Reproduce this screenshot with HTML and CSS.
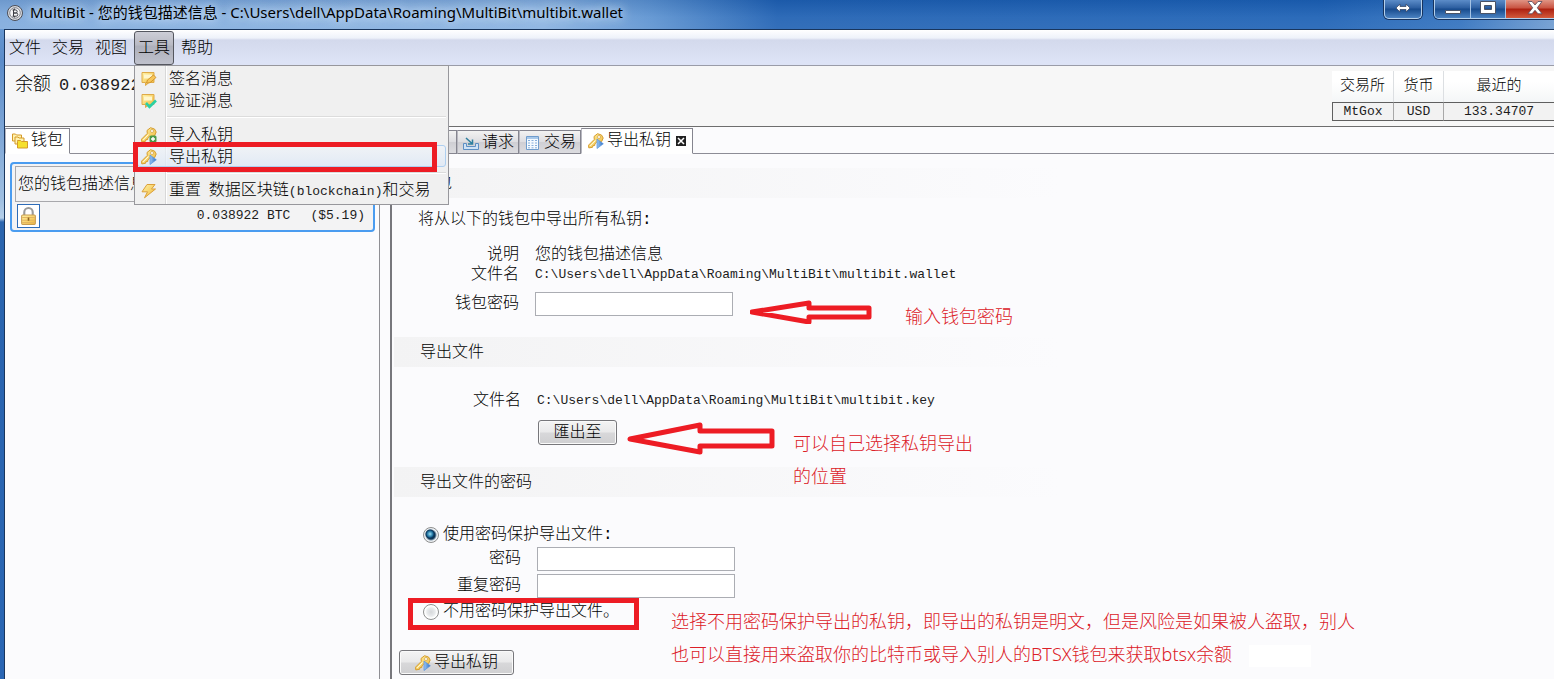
FILE: index.html
```html
<!DOCTYPE html>
<html lang="zh-CN">
<head>
  <meta charset="UTF-8">
  <meta name="viewport" content="width=device-width, initial-scale=1.0">
  <title>MultiBit</title>
  <link rel="stylesheet" href="styles.css">
</head>
<body>

  <!-- Shared icons -->
  <svg class="sprite" width="0" height="0">
    <defs>
      <linearGradient id="gold" x1="0" y1="0" x2="1" y2="1">
        <stop offset="0" stop-color="#fff3a8"/>
        <stop offset="1" stop-color="#f0b636"/>
      </linearGradient>
      <linearGradient id="blue" x1="0" y1="0" x2="1" y2="0">
        <stop offset="0" stop-color="#9cc8f4"/>
        <stop offset="1" stop-color="#2f6fc4"/>
      </linearGradient>
    </defs>
    <symbol id="key" viewBox="0 0 16 16">
      <path d="M6 3.500 9.500.7l4 1.300 1.700 3-1.500 3.500-3.200 1.200-2-.4-1.600 1.600-.2 1.600-1.800.2-.4 1.600-3.700.6-.3-2.700L6.300 6.400z" fill="url(#gold)" stroke="#d69d2e"/>
      <circle cx="11" cy="4" r="1.500" fill="#fff" stroke="#c49430" stroke-width=".6"/>
      <path d="M2.200 13 7.500 7.500" stroke="#fffbe0"/>
    </symbol>
    <symbol id="key-export" viewBox="0 0 16 16">
      <use href="#key"/>
      <path d="M9 6v9.500l6.300-4.700z" fill="url(#blue)" stroke="#5590dc" stroke-width=".7"/>
    </symbol>
    <symbol id="key-import" viewBox="0 0 16 16">
      <use href="#key"/>
      <rect x="8.500" y="8.500" width="7" height="7" rx="1.500" fill="#4c9a48"/>
      <path d="M12 10v4M10 12h4" stroke="#fff" stroke-width="1.400"/>
    </symbol>
    <symbol id="note" viewBox="0 0 16 16">
      <path d="M1 1.500h12v10H8l-3.500 3v-3H1z" fill="url(#gold)" stroke="#dfaa48"/>
      <path d="M3 3.500h8v4H3z" fill="#fff6cc"/>
    </symbol>
    <symbol id="sign" viewBox="0 0 16 16">
      <use href="#note"/>
      <path d="m5.500 12 1-3 6-5 2.500 2.500-6 5.200z" fill="#f8c65a" stroke="#c98a22" stroke-width=".8"/>
    </symbol>
    <symbol id="verify" viewBox="0 0 16 16">
      <use href="#note"/>
      <path d="m5 10 3.500 3.800L15 7.500" fill="none" stroke="#2ad0a4" stroke-width="2.600"/>
    </symbol>
    <symbol id="bolt" viewBox="0 0 16 16">
      <path d="M6 1.500h8L10.500 6h4L3.500 14.800l3-6H1z" fill="url(#gold)" stroke="#dba03a"/>
    </symbol>
    <symbol id="wallets" viewBox="0 0 16 16">
      <g fill="#fff2b0" stroke="#d59a28">
        <path d="M.5 2V1h3l1 1h5v6h-9z"/>
        <path d="M3 5V4h3l1 1h5v6H3z"/>
        <path d="M5.500 8.500v-1h3l1 1h6v6.500h-10z" fill="#f6e02c"/>
      </g>
    </symbol>
    <symbol id="request" viewBox="0 0 16 16">
      <path d="M.5 8.500v6h15v-6h-3v3h-9v-3z" fill="#cfe2f5" stroke="#5d8fc4"/>
      <path d="m3 3 6 5.500M9.500 4.500V9H5" fill="none" stroke="#2e7f9e" stroke-width="1.500"/>
    </symbol>
    <symbol id="send" viewBox="0 0 16 16">
      <path d="M.5 8.500v6h15v-6h-3v3h-9v-3z" fill="#cfe2f5" stroke="#5d8fc4"/>
      <path d="m5 9 6-6M6.500 2.500H11V7" fill="none" stroke="#2e7f9e" stroke-width="1.500"/>
    </symbol>
    <symbol id="sheet" viewBox="0 0 16 16">
      <path d="M1.500 1.500h12v13h-12z" fill="#f4faff" stroke="#6f9ccc"/>
      <path d="M2 3h11" stroke="#a7c8ea" stroke-width="2"/>
      <path d="M3 5.500h9M3 8h9M3 10.500h9M3 12.800h9" stroke="#86aeda" stroke-dasharray="2 1.500"/>
    </symbol>
  </svg>

  <div class="window">

    <!-- Title bar -->
    <div class="title-bar">
      <svg class="logo" viewBox="0 0 16 16">
        <circle cx="8" cy="8" r="7.500" fill="#d9dbe0" stroke="#4a4d55"/>
        <circle cx="8" cy="8" r="5.300" fill="#f4f4f6" stroke="#85878f"/>
        <path d="M6.500 4.500v7M5.500 5h3.200a1.500 1.500 0 0 1 0 3H6.500h2.700a1.600 1.600 0 0 1 0 3.200H5.500M7.600 3.500v1.500M7.600 11v1.500" fill="none" stroke="#3c3e45"/>
      </svg>
      <span class="title">MultiBit - 您的钱包描述信息 - C:\Users\dell\AppData\Roaming\MultiBit\multibit.wallet</span>
      <div class="window-buttons">
        <button class="win-btn resize" aria-label="调整">
          <svg width="16" height="10" viewBox="0 0 16 10"><path d="M1 5l4-4v2.500h6V1l4 4-4 4V6.500H5V9z" fill="#fff" stroke="#3b4a68" stroke-width=".8"/></svg>
        </button>
        <div class="win-group">
          <button class="win-btn" aria-label="最小化">
            <svg width="18" height="14" viewBox="0 0 18 14"><path d="M1.500 9.500h15v3h-15z" fill="#fff" stroke="#4b5366"/></svg>
          </button>
          <button class="win-btn" aria-label="最大化">
            <svg width="18" height="14" viewBox="0 0 18 14"><path d="M1.500 .5h15v12h-15zM5.500 4.500v4h7v-4z" fill="#fff" fill-rule="evenodd" stroke="#4b5366"/></svg>
          </button>
          <button class="win-btn close" aria-label="关闭">
            <svg width="16" height="14" viewBox="0 0 16 14"><path d="M1 .5h4l3 3.500 3-3.500h4L10.300 6.800l4.700 6h-4L8 9.300l-3 3.500H1l4.700-6z" fill="#fff" stroke="#54465a" stroke-width=".8"/></svg>
          </button>
        </div>
      </div>
    </div>

    <div class="app">

      <!-- Menu bar -->
      <nav class="menu-bar">
        <button>文件</button>
        <button>交易</button>
        <button>视图</button>
        <div class="menu">
          <button class="open">工具</button>
          <div class="dropdown">
            <button class="item"><svg><use href="#sign"/></svg>签名消息</button>
            <button class="item"><svg><use href="#verify"/></svg>验证消息</button>
            <hr>
            <button class="item"><svg><use href="#key-import"/></svg>导入私钥</button>
            <button class="item active"><svg><use href="#key-export"/></svg>导出私钥</button>
            <hr>
            <button class="item"><svg><use href="#bolt"/></svg><span>重置<code> </code>数据区块链<code>(blockchain)</code>和交易</span></button>
            <div class="mark-item"></div>
          </div>
        </div>
        <button>帮助</button>
      </nav>

      <!-- Balance and ticker -->
      <header class="summary">
        <div class="balance">余额<span>0.038922 BTC</span></div>
        <table class="ticker">
          <thead>
            <tr><th>交易所</th><th>货币</th><th>最近的</th></tr>
          </thead>
          <tbody>
            <tr><td>MtGox</td><td>USD</td><td>133.34707</td></tr>
          </tbody>
        </table>
      </header>

      <div class="panes">

        <!-- Wallet list -->
        <aside class="wallets">
          <div class="tabs">
            <button class="tab current"><svg><use href="#wallets"/></svg>钱包</button>
          </div>
          <div class="wallet">
            <div class="wallet-name">您的钱包描述信息</div>
            <div class="wallet-row">
              <button class="lock" aria-label="加密">
                <svg viewBox="0 0 16 18">
                  <path d="M4 8V5a4 4 0 0 1 8 0v3" fill="none" stroke="#9a9a9a" stroke-width="2"/>
                  <rect x="1.500" y="7.500" width="13" height="9" rx="1" fill="url(#gold)" stroke="#c79c50"/>
                  <path d="M2 10h12M2 12.500h12M2 14.800h12" stroke="#e3b460"/>
                  <path d="M8 10v3" stroke="#8a6420" stroke-width="1.500"/>
                </svg>
              </button>
              <span class="amount">0.038922 BTC</span>
              <span class="amount">($5.19)</span>
            </div>
          </div>
        </aside>

        <!-- Export private keys -->
        <main class="detail">
          <div class="tabs">
            <button class="tab"><svg><use href="#send"/></svg>发送</button>
            <button class="tab"><svg><use href="#request"/></svg>请求</button>
            <button class="tab"><svg><use href="#sheet"/></svg>交易</button>
            <button class="tab current"><svg><use href="#key-export"/></svg>导出私钥
              <svg class="tab-close" viewBox="0 0 10 10"><path d="M0 0h10v10H0z" fill="#222"/><path d="m2 2 6 6M8 2 2 8" stroke="#fff" stroke-width="1.500"/></svg>
            </button>
          </div>

          <h2>钱包</h2>
          <section class="source">
            <p>将从以下的钱包中导出所有私钥:</p>
            <div class="row"><span class="label">说明</span><span>您的钱包描述信息</span></div>
            <div class="row"><span class="label">文件名</span><span class="path">C:\Users\dell\AppData\Roaming\MultiBit\multibit.wallet</span></div>
            <div class="row field"><label class="label" for="wallet-password">钱包密码</label><input type="password" id="wallet-password"></div>
          </section>

          <h2>导出文件</h2>
          <section class="target">
            <div class="row"><span class="label">文件名</span><span class="path">C:\Users\dell\AppData\Roaming\MultiBit\multibit.key</span></div>
            <button class="push">匯出至</button>
          </section>

          <h2>导出文件的密码</h2>
          <section class="protect">
            <label class="choice"><input type="radio" name="protect" checked>使用密码保护导出文件:</label>
            <div class="row field"><label class="label" for="password">密码</label><input type="password" id="password"></div>
            <div class="row field"><label class="label" for="repeat">重复密码</label><input type="password" id="repeat"></div>
            <label class="choice plain"><input type="radio" name="protect">不用密码保护导出文件。<span class="mark-choice"></span></label>
          </section>
          <button class="push export"><svg><use href="#key-export"/></svg>导出私钥</button>

          <!-- Red notes over the form -->
          <svg class="arrow arrow-password" viewBox="0 0 122 24"><path d="M2 12 59 3v5h60v9H59v5z"/></svg>
          <p class="note note-password">输入钱包密码</p>
          <svg class="arrow arrow-file" viewBox="0 0 148 34"><path d="M3 17 73 3v6h72v15H73v6z"/></svg>
          <p class="note note-file">可以自己选择私钥导出<br>的位置</p>
          <p class="note note-plain">选择不用密码保护导出的私钥，即导出的私钥是明文，但是风险是如果被人盗取，别人<br>也可以直接用来盗取你的比特币或导入别人的BTSX钱包来获取btsx余额</p>
          <div class="blank"></div>
        </main>
      </div>
    </div>
  </div>
</body>
</html>
```

FILE: styles.css
```css
* { box-sizing: border-box; }
body { margin: 0; font: 300 16px/20px "Liberation Mono", "Noto Sans CJK SC", monospace; color: #000; overflow: hidden; }
button, input { font: inherit; color: inherit; }
button { margin: 0; padding: 0; border: 0; background: none; }
p, h2 { margin: 0; font-size: 16px; font-weight: 300; }
code, .path, .amount, .balance span, td { font: 13px/16px "Liberation Mono", monospace; color: #1c1c1c; }
.sprite { position: absolute; }

.window { min-height: 100vh; display: flex; flex-direction: column; padding-left: 4px; background: linear-gradient(#6f9fd4 0, #5b8cca 60px, #9fbfe2 200px, #b5cfea 218px, #2a64ae 222px, #2a66b4 100%); }

/* title bar */
.title-bar { display: flex; align-items: center; height: 29px; margin-left: -4px; padding-left: 7px; background: linear-gradient(rgba(20,60,120,.15), rgba(255,255,255,.08) 60%, rgba(255,255,255,.1)), linear-gradient(90deg, #7da9dc, #86b0e0 35%, #5a91d0 42%, #1d5fb2 50%, #1a5fb4 85%, #2e6fbd 94%, #6c9ad0); }
.logo { width: 16px; height: 16px; margin: 0 7px 4px 0; }
.title { flex: 1; padding-bottom: 5px; font: 400 15px/20px "Noto Sans", "Noto Sans CJK SC", sans-serif; text-shadow: 0 0 8px #cfe2f7, 0 0 12px #cfe2f7; white-space: nowrap; }
.window-buttons { display: flex; align-self: flex-start; gap: 12px; margin-right: -10px; }
.win-btn { display: flex; align-items: center; justify-content: center; width: 35px; height: 18px; padding-bottom: 3px; background: linear-gradient(#5c8cc8, #2b5d9f 45%, #174a8c 50%, #4a82c2); }
.win-btn + .win-btn { border-left: 1px solid #a5c3e4; }
.resize, .win-group { width: 38px; height: 19px; border: 1px solid #b4d0ec; border-top: 0; border-radius: 0 0 5px 5px; overflow: hidden; box-shadow: 0 0 0 1px #17335e; }
.win-group { display: flex; width: auto; }
.win-group .close { width: 58px; background: linear-gradient(#e09484, #c85240 45%, #ac2010 50%, #d25a3c); }

.app { flex: 1; display: flex; flex-direction: column; border-top: 1px solid #19365e; border-left: 1px solid #19365e; background: #fbfbfd; }

/* menu bar */
.menu-bar { display: flex; gap: 3px; height: 36px; padding-top: 1px; background: linear-gradient(#fff, #eef2fa 8px, #d3d9ec 10px, #dde3f6 32px); border-bottom: 1px solid #9a9ca8; }
.menu-bar > button, .menu > button { width: 40px; height: 34px; padding-top: 1px; border: 1px solid transparent; border-radius: 3px; white-space: nowrap; }
.menu { position: relative; }
.menu > .open { border-color: #55575f; background: linear-gradient(#cccdd6, #b9bac4 40%, #aeb0bb 45%, #bfc1cc); }
.dropdown { position: absolute; z-index: 2; top: 34px; left: 0; width: 315px; padding: 1px 2px 3px; background: linear-gradient(90deg, #f0f0f0 30px, #d8d8d8 30px, #d8d8d8 31px, #fff 31px, #fff 32px, #f0f0f0 32px); border: 1px solid #97979c; }
.item { display: flex; align-items: center; width: 100%; height: 22px; padding: 0 0 2px 3px; border: 1px solid transparent; border-radius: 3px; font-family: "Noto Sans CJK SC", sans-serif; white-space: nowrap; }
.item svg, .tab svg, .push svg { width: 16px; height: 16px; }
.item svg { margin: 4px 12px 0 0; }
.active { border-color: #aecff0; background: linear-gradient(rgba(240,245,250,.6), rgba(222,232,246,.8)); }
.dropdown hr { height: 2px; margin: 5px 0 5px 30px; border: 0; border-top: 1px solid #dcdcdc; border-bottom: 1px solid #fff; }
.mark-item { position: absolute; top: 76px; left: -2px; width: 304px; height: 30px; border: 5px solid #ed1c24; }

/* balance and ticker */
.summary { display: flex; justify-content: space-between; height: 61px; padding: 5px 0 0 10px; background: #f7f7f7; border-bottom: 1px solid #6e6e6e; }
.balance { padding-top: 4px; font-size: 18px; white-space: nowrap; }
.balance span { margin-left: 8px; font-size: 17px; }
.ticker { width: 222px; height: 50px; table-layout: fixed; border-spacing: 0; text-align: center; }
.ticker th { height: 31px; padding: 1px 0 0; font-size: 15px; font-weight: 300; background: linear-gradient(#fff 35%, #f4f6f7); border-right: 1px solid #dcdfe2; }
.ticker th:nth-child(1) { width: 62px; }
.ticker th:nth-child(2) { width: 50px; }
.ticker td { height: 19px; padding: 0; background: #f2f2f2; border: 1px solid #5f5f5f; border-right-color: #a8a8a8; border-left-width: 0; }
.ticker td:first-child { border-left-width: 1px; }
.ticker td:last-child, .ticker th:last-child { border-right: 0; }

/* panes */
.panes { flex: 1; display: flex; }
.wallets { width: 375px; border-right: 1px solid #8f8f94; }
.tabs { display: flex; align-items: flex-end; height: 27px; }
.tabs::after { content: ""; flex: 1; border-bottom: 1px solid #8c8c96; }
.tab { display: flex; align-items: center; gap: 3px; height: 24px; padding: 1px 4px 0 5px; border: 1px solid #85858f; border-left-color: #b8b8c0; background: linear-gradient(#f2f2f2, #dedee2 48%, #cfcfd4 52%, #dcdce0); white-space: nowrap; }
.tab:first-child { padding-right: 7px; }
.tab.current { gap: 3px; height: 26px; padding: 0 6px; background: #fff; border-bottom-color: #fff; }
.tab .tab-close { width: 10px; height: 10px; margin: 0 0 0 2px; }

.wallet { margin: 8px 4px 0 5px; padding: 2px 3px 1px; border: 2px solid #4a9cf0; border-radius: 4px; background: #f3f3f4; }
.wallet-name { height: 36px; padding: 8px 2px 0; border: 1px solid #a8a8ac; }
.wallet-row { display: flex; align-items: center; gap: 20px; padding: 2px 5px 1px 2px; }
.lock { width: 23px; height: 24px; margin-right: auto; padding: 1px 2px; border: 1px solid #2e6cb8; background: #fff; }
.lock svg { display: block; width: 17px; height: 19px; }

.detail { position: relative; flex: 1; margin-left: 10px; border-left: 2px solid #77777c; }
h2 { height: 30px; padding: 6px 26px 0; margin-left: 2px; background: linear-gradient(90deg, #f3f3f4, #fbfbfd 665px); }
.tabs + h2 { margin-top: 14px; }
section { display: flow-root; }
.source { height: 139px; padding-top: 12px; }
.source p { padding-left: 26px; margin-bottom: 15px; }
.target { height: 100px; padding-top: 24px; }
.protect { height: 153px; padding-top: 27px; }
.row { display: grid; grid-template-columns: 127px 1fr; column-gap: 16px; align-items: center; height: 20px; }
.target .row, .protect .row { grid-template-columns: 129px 1fr; }
.label { text-align: right; }
.field { height: 27px; }
.source .field { margin-top: 5px; }
.field input { width: 198px; height: 24px; padding: 0 4px; border: 1px solid #abadb3; background: #fff; }
.push { display: flex; align-items: center; justify-content: center; height: 25px; border: 1px solid #77777b; border-radius: 3px; background: linear-gradient(#f4f4f4, #e9e9ea 48%, #d8d8da 52%, #cfcfd1); box-shadow: inset 0 0 0 1px #fafafa; }
.target .push { width: 79px; margin: 9px 0 0 146px; }
.push.export { gap: 3px; width: 115px; margin-left: 7px; }
.choice { position: relative; display: flex; align-items: center; width: max-content; height: 21px; margin-left: 31px; }
.choice.plain { height: 26px; }
.choice input { appearance: none; width: 16px; height: 16px; margin: 0 4px 0 0; border: 1px solid #8e8f8f; border-radius: 50%; background: radial-gradient(circle, #d5d7da 0, #e8eaec 4px, #fff 6px); }
.choice input:checked { background: radial-gradient(circle at 6px 6px, #9be0f5 0, #1b6d9c 3px, #0c3558 4px, transparent 5px), radial-gradient(circle, #0c3558 4px, #eef1f4 6px); }

/* red notes */
.mark-choice { position: absolute; top: -1px; left: -15px; width: 231px; height: 32px; border: 5px solid #ed1c24; }
.arrow { position: absolute; fill: none; stroke: #ed1c24; stroke-width: 5; stroke-linejoin: round; }
.arrow-password { top: 173px; left: 358px; width: 122px; height: 24px; }
.arrow-file { top: 295px; left: 235px; width: 148px; height: 34px; }
.note { position: absolute; color: #dc2028; font: 300 18px/33px "Noto Sans", "Noto Sans CJK SC", sans-serif; white-space: nowrap; }
.note-password { top: 173px; left: 513px; }
.note-file { top: 300px; left: 401px; }
.note-plain { top: 478px; left: 279px; }
.blank { position: absolute; top: 518px; left: 857px; width: 62px; height: 22px; background: #fff; }
```
